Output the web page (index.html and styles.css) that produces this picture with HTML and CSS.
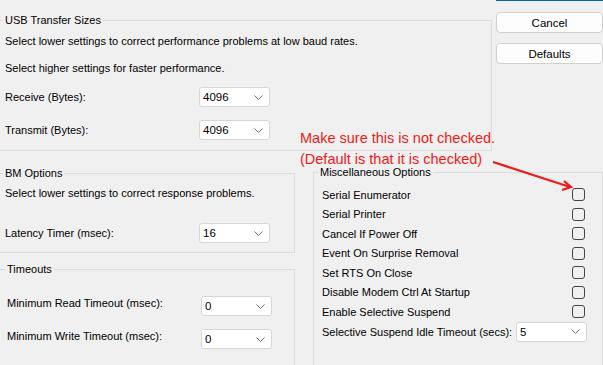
FILE: index.html
```html
<!DOCTYPE html>
<html lang="en">
<head>
  <meta charset="UTF-8">
  <title>Advanced Settings</title>
  <link rel="stylesheet" href="styles.css">
</head>
<body>
  <div class="dialog">
    <div class="top">
      <fieldset class="group usb">
        <legend>USB Transfer Sizes</legend>
        <p class="note">Select lower settings to correct performance problems at low baud rates.</p>
        <p class="note">Select higher settings for faster performance.</p>
        <div class="row first">
          <span class="label">Receive (Bytes):</span>
          <div class="select">4096 <svg width="9" height="5" viewBox="0 0 9 5"><polyline points="0.5,0.5 4.5,4.5 8.5,0.5" /></svg></div>
        </div>
        <div class="row">
          <span class="label">Transmit (Bytes):</span>
          <div class="select">4096 <svg width="9" height="5" viewBox="0 0 9 5"><polyline points="0.5,0.5 4.5,4.5 8.5,0.5" /></svg></div>
        </div>
      </fieldset>

      <div class="buttons">
        <div class="ok-edge"></div>
        <button class="btn">Cancel</button>
        <button class="btn">Defaults</button>
      </div>
    </div>

    <div class="bottom">
      <div class="left-col">
        <fieldset class="group bm">
          <legend>BM Options</legend>
          <p class="note">Select lower settings to correct response problems.</p>
          <div class="row first">
            <span class="label">Latency Timer (msec):</span>
            <div class="select">16 <svg width="9" height="5" viewBox="0 0 9 5"><polyline points="0.5,0.5 4.5,4.5 8.5,0.5" /></svg></div>
          </div>
        </fieldset>

        <fieldset class="group timeouts">
          <legend>Timeouts</legend>
          <div class="row first">
            <span class="label raised">Minimum Read Timeout (msec):</span>
            <div class="select">0 <svg width="9" height="5" viewBox="0 0 9 5"><polyline points="0.5,0.5 4.5,4.5 8.5,0.5" /></svg></div>
          </div>
          <div class="row">
            <span class="label raised">Minimum Write Timeout (msec):</span>
            <div class="select">0 <svg width="9" height="5" viewBox="0 0 9 5"><polyline points="0.5,0.5 4.5,4.5 8.5,0.5" /></svg></div>
          </div>
        </fieldset>
      </div>

      <fieldset class="group misc">
        <legend>Miscellaneous Options</legend>
        <div class="check-row"><span class="check-label">Serial Enumerator</span><span class="checkbox"></span></div>
        <div class="check-row"><span class="check-label">Serial Printer</span><span class="checkbox"></span></div>
        <div class="check-row"><span class="check-label">Cancel If Power Off</span><span class="checkbox"></span></div>
        <div class="check-row"><span class="check-label">Event On Surprise Removal</span><span class="checkbox"></span></div>
        <div class="check-row"><span class="check-label">Set RTS On Close</span><span class="checkbox"></span></div>
        <div class="check-row"><span class="check-label">Disable Modem Ctrl At Startup</span><span class="checkbox"></span></div>
        <div class="check-row"><span class="check-label">Enable Selective Suspend</span><span class="checkbox"></span></div>
        <div class="row suspend">
          <span class="label">Selective Suspend Idle Timeout (secs):</span>
          <div class="select">5 <svg width="9" height="5" viewBox="0 0 9 5"><polyline points="0.5,0.5 4.5,4.5 8.5,0.5" /></svg></div>
        </div>
      </fieldset>
    </div>

    <!-- nota en rojo sobre el dialogo -->
    <div class="annotation">
      <p>Make sure this is not checked.</p>
      <p>(Default is that it is checked)</p>
    </div>
    <svg class="arrow" width="90" height="32" viewBox="0 0 90 32">
      <line x1="1" y1="2" x2="78" y2="27" />
      <polyline points="72,21 79,27 70,30" />
    </svg>
  </div>
</body>
</html>
```

FILE: styles.css
```css
body {
  margin: 0;
  background: #f0f0f0;
  font-family: 'Segoe UI', 'Liberation Sans', sans-serif;
  font-size: 11px;
  color: #000;
  overflow: hidden;
}

.dialog {
  position: relative;
  width: 603px;
  height: 365px;
  overflow: hidden;
}

.top {
  display: flex;
  align-items: flex-start;
}

.group {
  margin: 0;
  padding: 0;
  min-width: 0;
  border: 1px solid #dcdcdc;
}

.group legend {
  padding: 0 2px;
  line-height: 16px;
}

.note {
  margin: 0;
  line-height: 16px;
  white-space: nowrap;
}

.row {
  display: flex;
  align-items: center;
  height: 20px;
}

.label {
  width: 194px;
  flex: none;
  white-space: nowrap;
}

.label.raised {
  padding-bottom: 6px;
}

.select {
  width: 71px;
  height: 20px;
  box-sizing: border-box;
  background: #fff;
  border: 1px solid #d6d6d6;
  border-radius: 3px;
  display: flex;
  align-items: center;
  justify-content: space-between;
  padding: 0 6px 0 3px;
  font-size: 11.5px;
}

.select svg polyline {
  fill: none;
  stroke: #6e6e6e;
  stroke-width: 1;
}

/* USB */
.usb {
  margin: 12px 0 0 -10px;
  width: 503px;
  box-sizing: border-box;
  padding: 5px 0 10px 14px;
}

.usb legend {
  margin-left: -2px;
}

.usb .note + .note {
  margin-top: 11px;
}

.usb .row.first {
  margin-top: 11px;
}

.usb .row + .row {
  margin-top: 13px;
}

/* botones */
.buttons {
  display: flex;
  flex-direction: column;
  margin-left: 4px;
}

.ok-edge {
  width: 107px;
  height: 2px;
  margin-top: -1px;
  background: #0067c0;
}

.btn {
  width: 107px;
  height: 21px;
  background: #fdfdfd;
  border: 1px solid #d0d0d0;
  border-radius: 4px;
  font-family: inherit;
  font-size: 11.5px;
  color: #000;
  padding: 0;
}

.ok-edge + .btn {
  margin-top: 11px;
}

.btn + .btn {
  margin-top: 10px;
}

/* parte de abajo */
.bottom {
  display: flex;
  align-items: flex-start;
}

.left-col {
  width: 305px;
  margin-left: -10px;
  flex: none;
}

.bm {
  margin-top: 14px;
  padding: 4px 0 9px 14px;
}

.bm legend {
  margin-left: -2px;
}

.bm .row.first {
  margin-top: 22px;
}

.timeouts {
  margin-top: 8px;
  padding: 19px 0 40px 16px;
}

.timeouts legend {
  margin-left: -2px;
}

.timeouts .row + .row {
  margin-top: 13px;
}

.misc {
  margin: 13px 0 0 18px;
  width: 320px;
  height: 220px;
  box-sizing: border-box;
  padding: 5px 0 0 8px;
}

.misc legend {
  margin-left: -4px;
}

.check-row {
  display: flex;
  align-items: center;
  height: 19.5px;
}

.check-label {
  width: 250px;
  flex: none;
}

.checkbox {
  width: 13px;
  height: 13px;
  box-sizing: border-box;
  border: 1px solid #444;
  border-radius: 3px;
}

/* anotacion roja */
.annotation {
  position: absolute;
  left: 300px;
  top: 128px;
  color: #f01818;
  font-size: 14.5px;
  line-height: 21px;
}

.annotation p {
  margin: 0;
}

.arrow {
  position: absolute;
  left: 492px;
  top: 160px;
}

.arrow line,
.arrow polyline {
  fill: none;
  stroke: #f01818;
  stroke-width: 2.2;
}
```
